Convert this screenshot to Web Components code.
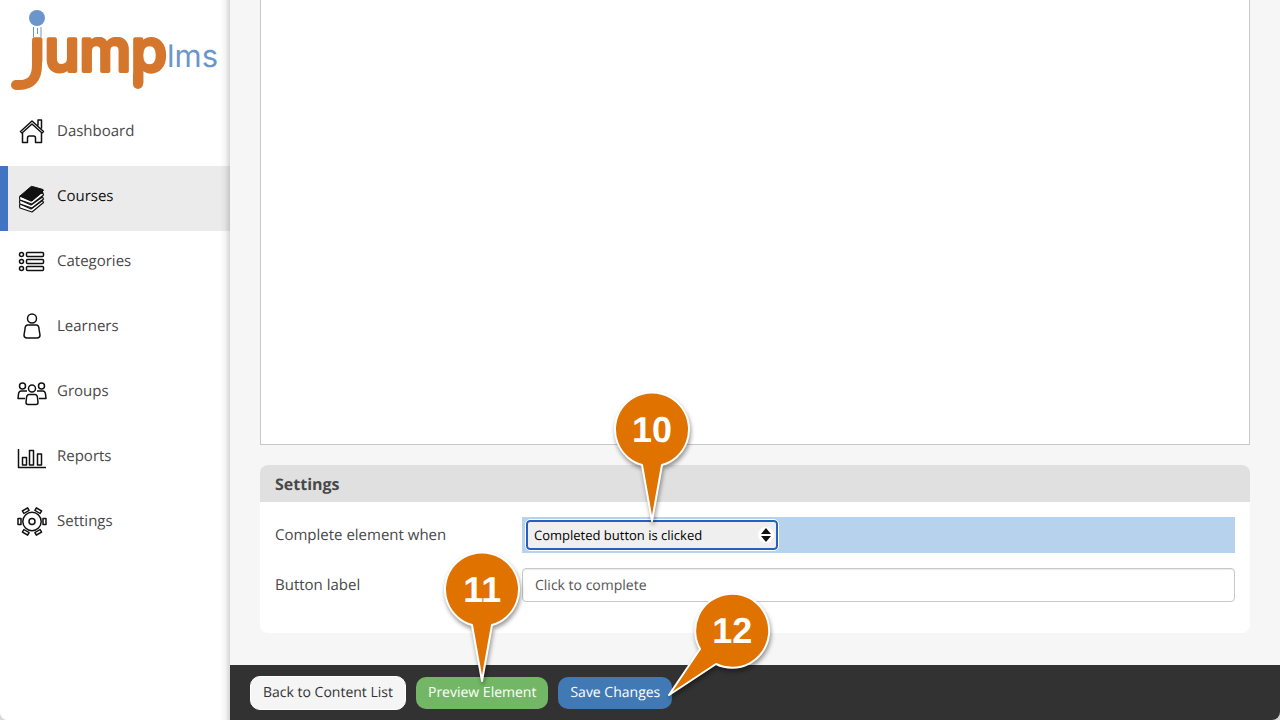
<!DOCTYPE html>
<html lang="en">
<head>
<meta charset="utf-8">
<meta name="viewport" content="width=device-width, initial-scale=1">
<title>Jump LMS</title>
<style>
  html, body { height: 100%; margin: 0; }
  body { background: #d9d9d9; color: #484848; font: 15px/20px "Open Sans", "Noto Sans", sans-serif; text-rendering: geometricPrecision; }
</style>
</head>
<body>
<jl-app>
  <jl-sidebar slot="sidebar">
    <jl-nav-item icon="home" href="#dashboard">Dashboard</jl-nav-item>
    <jl-nav-item icon="books" href="#courses" active>Courses</jl-nav-item>
    <jl-nav-item icon="list" href="#categories">Categories</jl-nav-item>
    <jl-nav-item icon="person" href="#learners">Learners</jl-nav-item>
    <jl-nav-item icon="people" href="#groups">Groups</jl-nav-item>
    <jl-nav-item icon="chart" href="#reports">Reports</jl-nav-item>
    <jl-nav-item icon="gear" href="#settings">Settings</jl-nav-item>
  </jl-sidebar>
  <jl-editor></jl-editor>
  <jl-settings></jl-settings>
  <jl-action-bar slot="footer">
    <jl-button>Back to Content List</jl-button>
    <jl-button kind="success">Preview Element<jl-callout slot="callout">11</jl-callout></jl-button>
    <jl-button kind="primary">Save Changes<jl-callout slot="callout" side>12</jl-callout></jl-button>
  </jl-action-bar>
</jl-app>

<script>
const define = (name, markup, setup) => {
  const template = document.createElement('template');
  template.innerHTML = markup;
  customElements.define(name, class extends HTMLElement {
    constructor() {
      super();
      this.attachShadow({ mode: 'open' }).append(template.content.cloneNode(true));
    }
    connectedCallback() { if (setup) setup(this, this.shadowRoot); }
  });
};

const icons = {
  home: '<path d="M3.500 12.500 15 2l11.500 10.500-1.500 1.500L15 5 5 14zM5.500 14v9.500h5V19q0-2 2-2h4q2 0 2 2v4.500h6V14M21 6.500V1h3.500v8.500"/>',
  books: '<g fill="#fff" stroke-width="1.200"><path d="M3 20q-1 2 0 4l12 4 11.500-9.500-1-2L14 25z"/><path d="M3 16q-1 2 0 4l12 4 11.500-9-1-2L14 21z"/><path d="M3 12q-1 2 0 4l12 4 11.500-9-1-3L14 17z"/></g><path fill="#111" stroke-width="1" d="M3 12 13.500 3q1-1 2-.5L26 5.500q1 .5 0 1.500L15 17z"/>',
  list: '<circle cx="4.500" cy="5.500" r="2"/><circle cx="4.500" cy="12.500" r="2"/><circle cx="4.500" cy="19.500" r="2"/><rect x="9.500" y="3.500" width="17" height="4" rx="1"/><rect x="9.500" y="10.500" width="17" height="4" rx="1"/><rect x="9.500" y="17.500" width="17" height="4" rx="1"/>',
  person: '<circle cx="15" cy="4.500" r="4.500"/><path d="M11 11h8q3 0 3 4l1 6q0 3-3 3H10q-3 0-3-3l1-6q0-4 3-4z"/>',
  people: '<circle cx="15" cy="9.500" r="3.500"/><circle cx="5.500" cy="7" r="3"/><circle cx="24.500" cy="7" r="3"/><path d="M12 15.500h6q2 0 2.500 3l.5 5q0 2-2 2h-8q-2 0-2-2l.5-5q.5-3 2.500-3zM10 12H4q-2 0-2.500 3L1 19.500h7M20 12h6q2 0 2.500 3l.5 4.500h-7"/>',
  chart: '<path d="M1.500 5v18.500H29M5.500 21v-7.500h4V21zM12.500 21V6.500h4V21zM20.500 21V10h4v11z"/>',
  gear: '<circle cx="15" cy="12.500" r="9.200"/><circle cx="15" cy="12.500" r="3"/>' +
    [0, 60, 120, 180, 240, 300].map(a => `<path transform="rotate(${a} 15 12.500)" d="M26 9.500h3v6h-3z"/>`).join('')
};

define('jl-app', `
  <style>
    :host { display: grid; grid-template-columns: 230px minmax(0, 1fr); min-height: 100vh;
      border-radius: 0 0 8px 8px; overflow: hidden; background: #f6f6f6; }
    .side { display: grid; position: relative; }
    .side::after { content: ""; position: absolute; inset: 0 0 0 auto; width: 10px; pointer-events: none;
      background: linear-gradient(to left, rgba(0,0,0,.16), rgba(0,0,0,.04) 5px, transparent); }
    .page { display: flex; flex-direction: column; min-width: 0; }
    main { flex: 1; display: flex; flex-direction: column; gap: 20px; padding: 0 30px 32px; }
  </style>
  <div class="side"><slot name="sidebar"></slot></div>
  <div class="page"><main><slot></slot></main><slot name="footer"></slot></div>`);

define('jl-logo', `
  <style>
    :host { display: block; height: 101px; }
    a, svg { display: block; }
    .word { font: 500 58px Inter, sans-serif; fill: #d4762c; stroke: #d4762c; stroke-width: 4; stroke-linejoin: round; }
    .suffix { font: 400 31px Inter, sans-serif; fill: #6b96cb; }
    .flourish { fill: none; stroke: #d4762c; stroke-width: 10; stroke-linecap: round; }
  </style>
  <a href="#home" aria-label="jump lms">
    <svg width="230" height="101" viewBox="0 0 230 101">
      <defs><clipPath id="stems"><path d="M28 37H230V101H46V62H28z"/></clipPath></defs>
      <circle cx="37" cy="18" r="8" fill="#6b96cb"/>
      <path d="M33.500 27v10M37.500 28v6M41 27v10" stroke="#6b96cb"/>
      <path class="flourish" d="M37 43v22q0 20-18 20H16M138 76v8"/>
      <g clip-path="url(#stems)"><text class="word" x="30" y="71">jump</text></g>
      <text class="suffix" x="167" y="67">lms</text>
    </svg>
  </a>`);

define('jl-sidebar', `
  <style>
    :host { display: block; background: #fff; }
    nav { display: flex; flex-direction: column; }
  </style>
  <jl-logo></jl-logo>
  <nav aria-label="Main"><slot></slot></nav>`);

define('jl-nav-item', `
  <style>
    :host { display: block; }
    a { display: flex; align-items: center; gap: 10px; box-sizing: border-box; height: 65px; padding: 0 17px;
      color: inherit; text-decoration: none; }
    span { padding-bottom: 6px; }
    svg { width: 30px; height: 30px; overflow: visible; fill: none; stroke: #111; stroke-width: 1.5; stroke-linejoin: round; }
    :host([active]) a { background: #ebebeb; color: #111; border-left: 8px solid #4174c2; padding-left: 9px; }
  </style>
  <a><svg viewBox="0 0 30 30" aria-hidden="true"></svg><span><slot></slot></span></a>`,
  (host, root) => {
    root.querySelector('a').href = host.getAttribute('href');
    root.querySelector('svg').innerHTML = icons[host.getAttribute('icon')];
  });

define('jl-editor', `
  <style>
    :host { display: block; flex: 1; min-height: 200px; background: #fff; border: 1px solid #c8c8c8; border-top: 0; }
  </style>`);

define('jl-settings', `
  <style>
    :host { display: block; }
    section { background: #fff; border-radius: 8px; }
    h2 { margin: 0; padding: 9px 15px 8px; background: #e0e0e0; border-radius: 8px 8px 0 0; font-size: 16px; line-height: 20px; }
    form { display: grid; grid-template-columns: 247px minmax(0, 1fr); row-gap: 15px; align-items: center; padding: 15px 15px 31px; }
    .highlight { background: #b7d2ed; }
    .picker { position: relative; box-sizing: border-box; width: 260px; padding: 3px 4px; }
    select, input { box-sizing: border-box; width: 100%; margin: 0; font-family: inherit; text-rendering: inherit; }
    select { display: block; height: 30px; padding: 0 30px 0 6px; appearance: none; background: #efefef; color: #000;
      border: 2px solid #2460bf; border-radius: 4px; outline: 1px solid #fff; font-size: 13px; }
    .arrows { position: absolute; right: 8px; top: 10px; width: 16px; height: 16px; border-radius: 8px; background: #fff; pointer-events: none; }
    input { height: 34px; padding: 0 12px; border: 1px solid #c8c8c8; border-radius: 4px; background: #fff;
      color: #555; font-size: 14px; box-shadow: inset 0 1px 1px rgba(0,0,0,.08); }
  </style>
  <section>
    <h2>Settings</h2>
    <form>
      <label for="when">Complete element when</label>
      <div class="highlight"><div class="picker">
        <select id="when"><option>Completed button is clicked</option></select>
        <svg class="arrows" viewBox="0 0 16 16" aria-hidden="true"><path fill="#111" d="M8 1l5 6H3zM8 15l5-6H3z"/></svg>
        <jl-callout>10</jl-callout>
      </div></div>
      <label for="label">Button label</label>
      <input id="label" type="text" value="Click to complete">
    </form>
  </section>`);

define('jl-action-bar', `
  <style>
    :host { display: flex; align-items: center; gap: 10px; position: relative; z-index: 2; height: 55px;
      padding: 0 20px; background: #323232; }
  </style><slot></slot>`);

define('jl-button', `
  <style>
    :host { display: block; position: relative; }
    button { display: block; height: 34px; padding: 0 12px; border: 1px solid #fff; border-radius: 10px;
      background: #f5f5f5; color: #333; font: inherit; font-size: 14px; text-rendering: inherit; white-space: nowrap; }
    :host([kind]) button { height: 32px; border-color: transparent; color: #fff; padding: 0 11px; }
    :host([kind=success]) button { background: #73b766; }
    :host([kind=primary]) button { background: #4179b5; }
  </style>
  <button type="button"><slot></slot></button><slot name="callout"></slot>`);

define('jl-callout', `
  <style>
    :host { position: absolute; left: 50%; bottom: 100%; width: 80px; height: 132px; margin: 0 0 -5px -40px;
      pointer-events: none; color: #fff; font: bold 36px/40px "Liberation Sans", Arial, sans-serif; }
    :host([side]) { left: 100%; bottom: 12px; width: 108px; height: 106px; margin: 0 0 0 -6px; }
    svg { position: absolute; inset: 0; overflow: visible; fill: #e07200; stroke: #fff; stroke-width: 2; stroke-linejoin: round;
      filter: drop-shadow(1px 3px 2px rgba(0,0,0,.4)); }
    .tilted, :host([side]) .straight { display: none; }
    :host([side]) .tilted { display: block; }
    div { position: relative; width: 80px; padding-top: 20px; text-align: center; }
    :host([side]) div { margin-left: 26px; }
  </style>
  <svg class="straight" width="80" height="132" aria-hidden="true"><path d="M40 131 30 75A37 37 0 1 1 50 75Z"/></svg>
  <svg class="tilted" width="108" height="106" aria-hidden="true"><path d="M3 104 34 58A37 37 0 1 1 50 73Z"/></svg>
  <div><slot></slot></div>`);
</script>
</body>
</html>
